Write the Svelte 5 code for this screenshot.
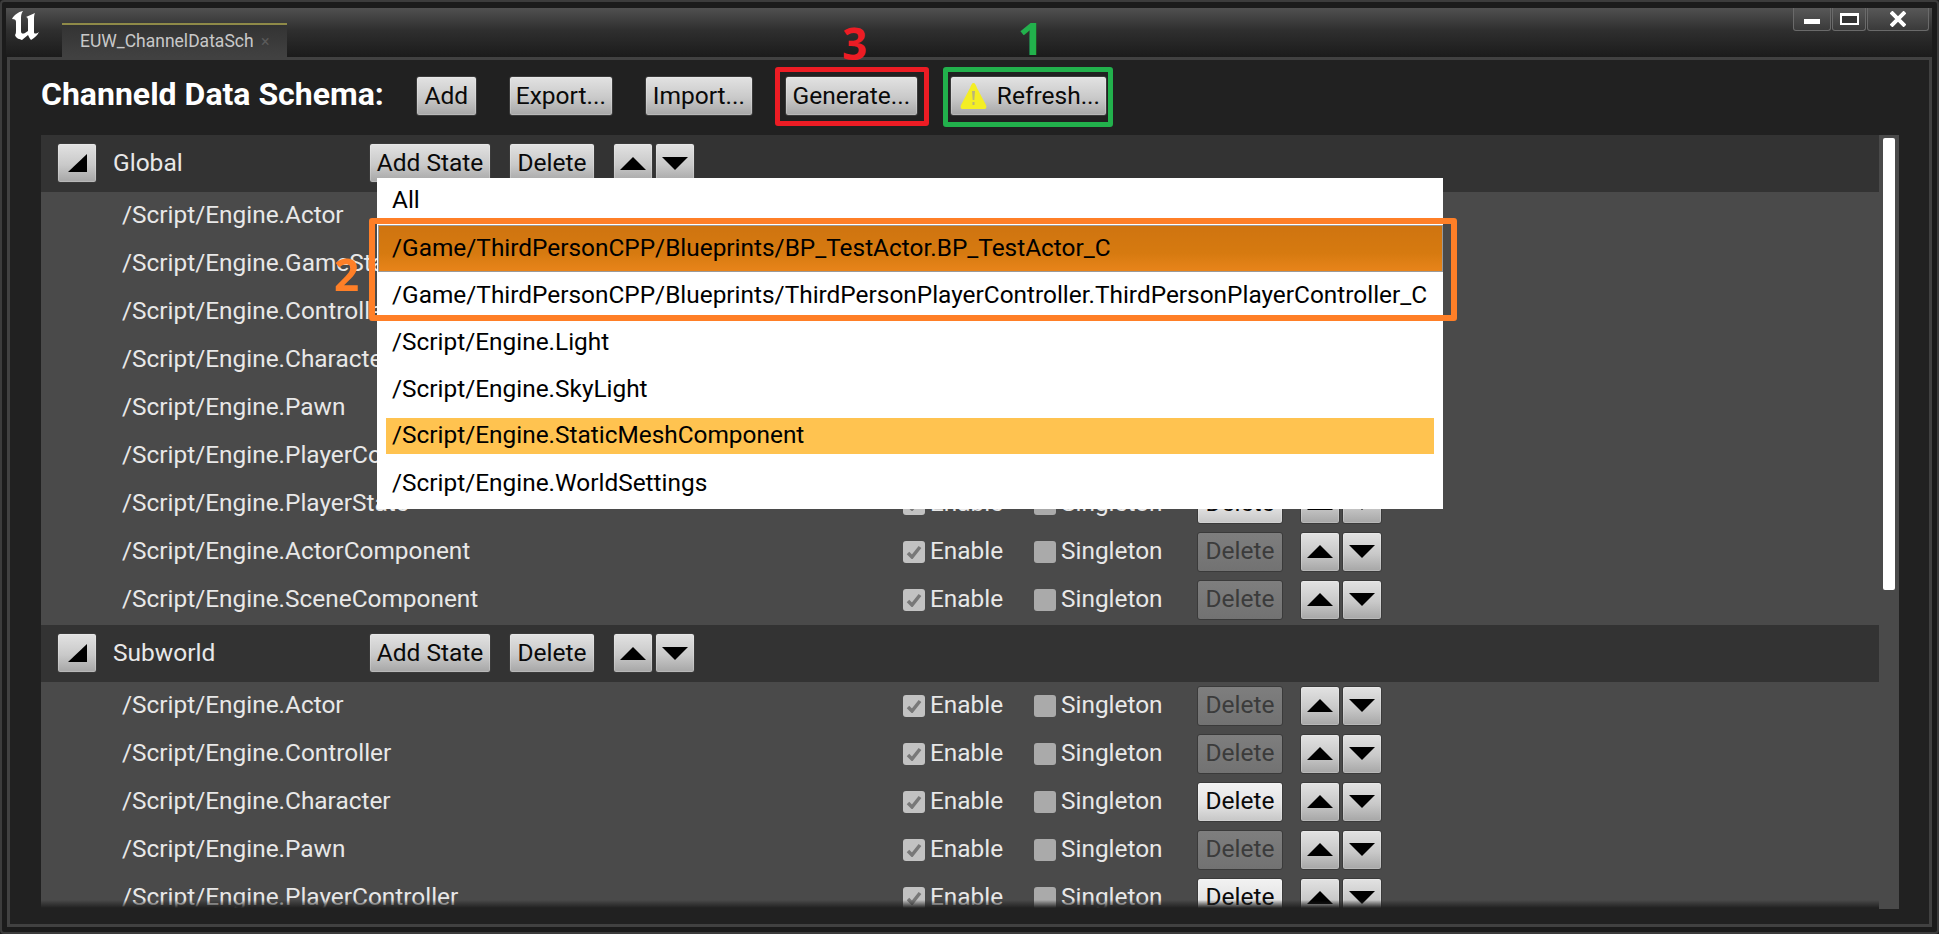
<script>
  const globalRows = [
    { name: 'Actor', canDelete: true },
    { name: 'GameStateBase', canDelete: true },
    { name: 'Controller', canDelete: true },
    { name: 'Character', canDelete: true },
    { name: 'Pawn', canDelete: true },
    { name: 'PlayerController', canDelete: true },
    { name: 'PlayerState', canDelete: true },
    { name: 'ActorComponent', canDelete: false },
    { name: 'SceneComponent', canDelete: false }
  ];
  const subworldRows = [
    { name: 'Actor', canDelete: false },
    { name: 'Controller', canDelete: false },
    { name: 'Character', canDelete: true },
    { name: 'Pawn', canDelete: false },
    { name: 'PlayerController', canDelete: true }
  ];
  const groups = [
    { title: 'Global', rows: globalRows },
    { title: 'Subworld', rows: subworldRows }
  ];
  const menu = [
    { label: 'All' },
    { label: '/Game/ThirdPersonCPP/Blueprints/BP_TestActor.BP_TestActor_C', kind: 'selected' },
    { label: '/Game/ThirdPersonCPP/Blueprints/ThirdPersonPlayerController.ThirdPersonPlayerController_C' },
    { label: '/Script/Engine.Light' },
    { label: '/Script/Engine.SkyLight' },
    { label: '/Script/Engine.StaticMeshComponent', kind: 'hover' },
    { label: '/Script/Engine.WorldSettings' }
  ];
</script>

{#snippet updown()}
  <div class="updown">
    <button class="btn arrow">
      <svg width="26" height="13" viewBox="0 0 26 13"><path d="M13 0 26 13H0Z" /></svg>
    </button>
    <button class="btn arrow">
      <svg width="26" height="13" viewBox="0 0 26 13"><path d="M0 0H26L13 13Z" /></svg>
    </button>
  </div>
{/snippet}

<div class="window">
  <div class="titlebar">
    <svg class="logo" width="30" height="31" viewBox="0 0 30 31">
      <path d="M1 8C3 4 7 1 12 0 10 3 10 5 10 8V20C10 23 12 23 14 22L17 20V9C17 7 16 6 15 6L24 2C23 4 23 6 23 9V21C23 23 25 23 28 21 26 25 23 27 20 29 19 28 18 26 17 24L11 29C9 28 5 28 4 24 5 23 5 21 5 18V11C5 9 4 8 1 8Z" />
    </svg>
    <div class="tab">
      <span class="tab-label">EUW_ChannelDataSchema</span>
      <span class="tab-close">×</span>
    </div>
    <div class="controls">
      <div class="ctl min"><i></i></div>
      <div class="ctl max"><i></i></div>
      <div class="ctl close">
        <svg width="16" height="16" viewBox="0 0 16 16"><path d="M1 1 15 15M15 1 1 15" /></svg>
      </div>
    </div>
  </div>

  <div class="panel">
    <div class="toolbar">
      <h1>Channeld Data Schema:</h1>
      <button class="btn add">Add</button>
      <button class="btn export">Export...</button>
      <button class="btn import">Import...</button>
      <button class="btn generate">Generate...</button>
      <button class="btn refresh">
        <svg width="27" height="26" viewBox="0 0 27 26">
          <path d="M13.5 0C15 0 16 2 17 5L26 22C27 25 26 26 24 26H3C1 26 0 25 1 22L10 5C11 2 12 0 13.5 0Z" fill="#f4ee24" />
          <path d="M12 8H15L14.3 17H12.7ZM12.5 19H14.5V22H12.5Z" fill="#b9b47a" />
        </svg>
        Refresh...
      </button>
    </div>

    <div class="body">
      <div class="list">
        {#each groups as group}
          <div class="group-head">
            <button class="btn collapse">
              <svg width="19" height="18" viewBox="0 0 19 18"><path d="M19 0V18H0Z" /></svg>
            </button>
            <span class="group-title">{group.title}</span>
            <button class="btn add-state">Add State</button>
            <button class="btn head-del">Delete</button>
            {@render updown()}
          </div>
          {#each group.rows as row}
            <div class="row">
              <span class="name">/Script/Engine.{row.name}</span>
              <label class="check enable">
                <span class="box on">
                  <svg width="16" height="14" viewBox="0 0 16 14"><path d="M2 8 6 12 14 2" /></svg>
                </span>
                Enable
              </label>
              <label class="check singleton"><span class="box"></span>Singleton</label>
              <button class="btn del" class:disabled={!row.canDelete}>Delete</button>
              {@render updown()}
            </div>
          {/each}
        {/each}
        <div class="fade"></div>
      </div>
      <div class="scrollbar"><div class="thumb"></div></div>
    </div>
  </div>

  <ul class="menu">
    {#each menu as item}
      <li class={item.kind}>{item.label}</li>
    {/each}
  </ul>

  <div class="note red"></div>
  <div class="note green"></div>
  <div class="note orange"></div>
  <span class="num n1">1</span>
  <span class="num n2">2</span>
  <span class="num n3">3</span>
</div>

<style>
  :global(body) {
    margin: 0;
    background: #1b1b1b;
  }
  .window {
    position: relative;
    width: 1939px;
    height: 934px;
    box-sizing: border-box;
    overflow: hidden;
    padding: 6px 0 0 5px;
    background: #1b1b1b;
    border: 2px solid #3c3c3c;
    border-radius: 4px;
    font-family: Roboto, sans-serif;
    display: flex;
    flex-direction: column;
  }
  .titlebar {
    position: relative;
    flex: none;
    height: 49px;
    margin: 0 5px 0 -1px;
    background: linear-gradient(#505050, #2f2f2f 45%, #1b1b1b);
  }
  .logo {
    position: absolute;
    left: 5px;
    top: 3px;
    fill: #fff;
  }
  .tab {
    position: absolute;
    left: 56px;
    top: 15px;
    width: 225px;
    height: 34px;
    box-sizing: border-box;
    background: linear-gradient(#333, #414141);
    border-top: 2px solid #8f8a48;
    display: flex;
    align-items: center;
    color: #c9c9c9;
    font-size: 17.5px;
    padding-left: 18px;
  }
  .tab-label {
    width: 173px;
    overflow: hidden;
    white-space: nowrap;
  }
  .tab-close {
    margin-left: 8px;
    color: #5a5a5a;
    font-size: 16px;
  }
  .controls {
    position: absolute;
    right: 3px;
    top: 0;
    display: flex;
    gap: 1px;
  }
  .ctl {
    height: 23px;
    box-sizing: border-box;
    border: 1px solid #6a6a6a;
    border-top: 0;
    border-radius: 0 0 3px 3px;
    background: linear-gradient(#585858, #3a3a3a);
    display: flex;
    align-items: center;
    justify-content: center;
  }
  .min { width: 38px; }
  .max { width: 34px; }
  .close { width: 62px; }
  .min i {
    width: 16px;
    height: 5px;
    margin-top: 5px;
    background: #fff;
  }
  .max i {
    width: 19px;
    height: 12px;
    box-sizing: border-box;
    border: 2px solid #fff;
    border-top-width: 3px;
    background: #333;
  }
  .close svg {
    stroke: #fff;
    stroke-width: 4;
  }
  .panel {
    flex: none;
    height: 870px;
    box-sizing: border-box;
    margin-right: 5px;
    border: 3px solid #414141;
    background: #212121;
    display: flex;
    flex-direction: column;
  }
  .toolbar {
    flex: none;
    height: 75px;
    box-sizing: border-box;
    padding: 16px 0 0 31px;
    display: flex;
    gap: 32px;
  }
  h1 {
    margin: 0;
    height: 40px;
    line-height: 36px;
    color: #fff;
    font-size: 32px;
    font-weight: 700;
    white-space: nowrap;
  }
  .btn {
    height: 40px;
    box-sizing: border-box;
    padding: 0 0 2px;
    border: 1px solid #3a3a3a;
    border-radius: 3px;
    background: linear-gradient(#e2e2e2, #c9c9c9 55%, #a6a6a6);
    box-shadow: inset 0 0 0 1px rgba(255, 255, 255, 0.2);
    color: #0a0a0a;
    font: 24.5px Roboto, sans-serif;
    white-space: nowrap;
    display: flex;
    align-items: center;
    justify-content: center;
  }
  .add { width: 61px; }
  .export { width: 104px; }
  .import { width: 108px; }
  .generate { width: 133px; }
  .refresh {
    width: 157px;
    padding-left: 9px;
    gap: 10px;
    justify-content: flex-start;
  }
  .refresh svg {
    margin-top: 2px;
  }
  .body {
    flex: 1;
    min-height: 0;
    padding: 0 30px 0 31px;
    display: flex;
    align-items: flex-start;
  }
  .list {
    position: relative;
    width: 1838px;
    height: 773px;
    overflow: hidden;
    background: #4a4a4a;
  }
  .fade {
    position: sticky;
    bottom: 0;
    height: 8px;
    margin-top: -8px;
    background: linear-gradient(transparent, #212121);
  }
  .group-head {
    height: 57px;
    box-sizing: border-box;
    padding: 0 0 1px 16px;
    background: #333;
    display: flex;
    align-items: center;
    gap: 18px;
  }
  .row + .group-head {
    margin-top: 1px;
  }
  .collapse {
    width: 40px;
    padding: 0;
    margin-right: -2px;
  }
  .group-title {
    width: 238px;
    padding-bottom: 2px;
    color: #e8e8e8;
    font-size: 24.5px;
  }
  .add-state { width: 122px; }
  .head-del { width: 86px; }
  .updown {
    display: flex;
    gap: 2px;
  }
  .arrow {
    width: 40px;
    padding: 0;
  }
  .arrow svg,
  .collapse svg {
    fill: #000;
  }
  .row {
    height: 48px;
    box-sizing: border-box;
    padding: 0 0 1px 81px;
    display: flex;
    align-items: center;
    color: #e8e8e8;
    font-size: 24.4px;
  }
  .name {
    width: 781px;
    padding-bottom: 2px;
    white-space: nowrap;
  }
  .check {
    padding-bottom: 2px;
    display: flex;
    align-items: center;
    gap: 5px;
  }
  .enable { width: 131px; }
  .singleton { width: 163px; }
  .box {
    width: 22px;
    height: 22px;
    margin-top: 2px;
    box-sizing: border-box;
    border-radius: 3px;
    background: #aaa;
    display: flex;
    align-items: center;
    justify-content: center;
  }
  .box.on {
    background: #c2c2c2;
  }
  .box svg {
    fill: none;
    stroke: #787878;
    stroke-width: 3.5;
  }
  .del {
    width: 86px;
    margin-right: 17px;
    background: linear-gradient(#f2f2f2, #e4e4e4 55%, #c6c6c6);
  }
  .del.disabled {
    background: linear-gradient(#7e7e7e, #727272);
    color: #3b3b3b;
    box-shadow: none;
  }
  .scrollbar {
    width: 20px;
    height: 774px;
    box-sizing: border-box;
    padding: 3px 4px 0;
    background: #4a4a4a;
  }
  .thumb {
    height: 452px;
    border-radius: 2px;
    background: #fff;
  }
  .menu {
    position: absolute;
    left: 375px;
    top: 176px;
    width: 1066px;
    height: 331px;
    margin: 0;
    padding: 0;
    list-style: none;
    background: #fff;
    color: #000;
    font-size: 24.4px;
  }
  .menu li {
    height: 47px;
    box-sizing: border-box;
    padding-left: 15px;
    line-height: 45px;
    white-space: nowrap;
  }
  .menu li:first-child {
    line-height: 43px;
  }
  .menu li.selected {
    margin-left: 1px;
    border: 1px solid #9a9a9a;
    padding-left: 13px;
    line-height: 44px;
    background: linear-gradient(#cf7410, #d67a10 60%, #e8841a);
  }
  .menu li.hover {
    margin: 5px 9px 6px;
    height: 36px;
    padding-left: 6px;
    line-height: 34px;
    background: #ffc350;
  }
  .note {
    position: absolute;
    box-sizing: border-box;
    border: 5px solid;
    border-radius: 3px;
  }
  .red {
    left: 773px;
    top: 65px;
    width: 154px;
    height: 59px;
    border-color: #ed1c24;
  }
  .green {
    left: 941px;
    top: 65px;
    width: 170px;
    height: 60px;
    border-color: #22b14c;
  }
  .orange {
    left: 367px;
    top: 216px;
    width: 1088px;
    height: 103px;
    border-width: 6px;
    border-color: #ff7f27;
  }
  .num {
    position: absolute;
    font-family: "Open Sans", sans-serif;
    font-weight: 700;
    font-size: 44px;
    line-height: 44px;
  }
  .n1 { left: 1016px; top: 14px; color: #22b14c; }
  .n2 { left: 332px; top: 250px; color: #ff7f27; }
  .n3 { left: 840px; top: 19px; color: #ed1c24; }
</style>
